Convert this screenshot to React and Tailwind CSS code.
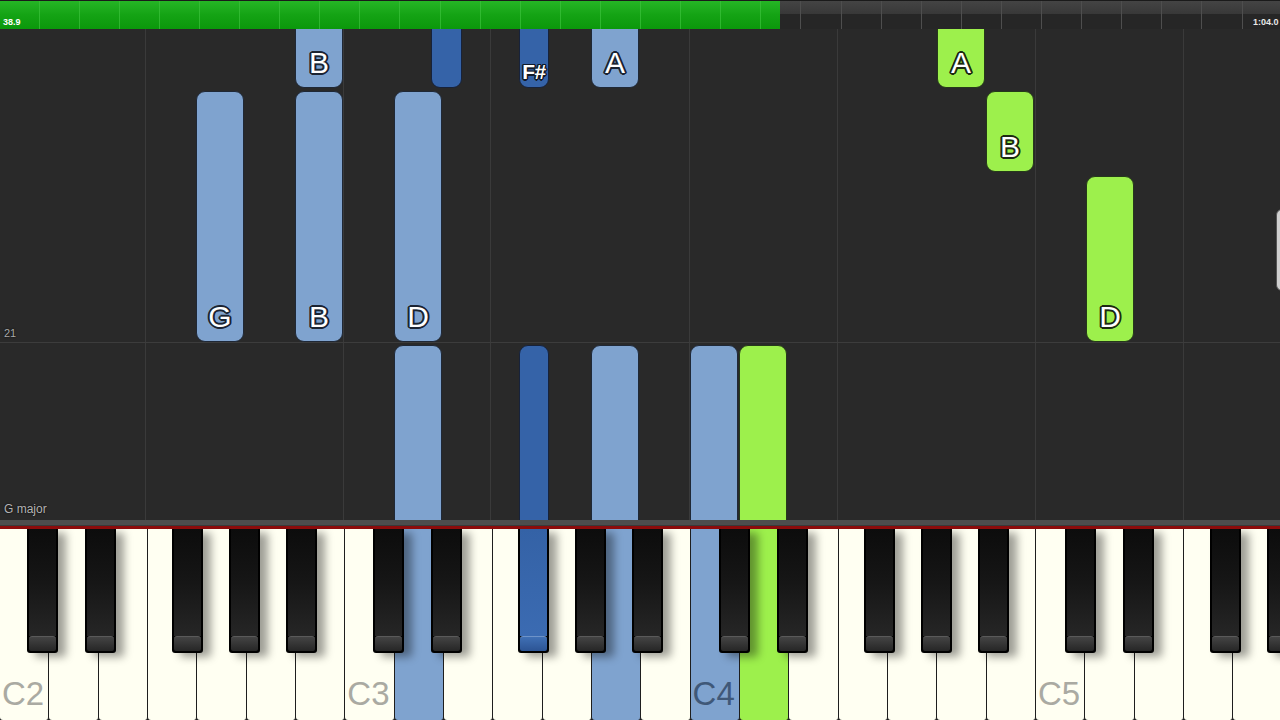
import React from "react";

const KW = 49.333;
const OCT = KW * 7;
const ROLL_TOP = 29;

const LB = "light";
const DB = "dark";
const GR = "green";

const notes = [
  { x: 295, w: 48, t: 10, b: 88, c: LB, l: "B" },
  { x: 431, w: 31, t: 10, b: 88, c: DB },
  { x: 519, w: 30, t: 10, b: 88, c: DB, l: "F#", small: true },
  { x: 591, w: 48, t: 10, b: 88, c: LB, l: "A" },
  { x: 937, w: 48, t: 10, b: 88, c: GR, l: "A" },
  { x: 196, w: 48, t: 91, b: 342, c: LB, l: "G" },
  { x: 295, w: 48, t: 91, b: 342, c: LB, l: "B" },
  { x: 394, w: 48, t: 91, b: 342, c: LB, l: "D" },
  { x: 986, w: 48, t: 91, b: 172, c: GR, l: "B" },
  { x: 1086, w: 48, t: 176, b: 342, c: GR, l: "D" },
  { x: 394, w: 48, t: 345, b: 540, c: LB },
  { x: 519, w: 30, t: 345, b: 540, c: DB },
  { x: 591, w: 48, t: 345, b: 540, c: LB },
  { x: 690, w: 48, t: 345, b: 540, c: LB },
  { x: 739, w: 48, t: 345, b: 540, c: GR },
];

const fillCls = {
  light: "bg-[#7fa3cf] border-[#1f2836]",
  dark: "bg-[#3563a8] border-[#17223a]",
  green: "bg-[#9df04c] border-[#25391a]",
};

const shadowCls = {
  light:
    "[text-shadow:0_0_1px_#1b2433,2px_0_0_#1b2433,-2px_0_0_#1b2433,0_2px_0_#1b2433,0_-2px_0_#1b2433,1.4px_1.4px_0_#1b2433,-1.4px_-1.4px_0_#1b2433,1.4px_-1.4px_0_#1b2433,-1.4px_1.4px_0_#1b2433]",
  dark:
    "[text-shadow:0_0_1px_#121a28,1.5px_0_0_#121a28,-1.5px_0_0_#121a28,0_1.5px_0_#121a28,0_-1.5px_0_#121a28,1px_1px_0_#121a28,-1px_-1px_0_#121a28,1px_-1px_0_#121a28,-1px_1px_0_#121a28]",
  green:
    "[text-shadow:0_0_1px_#1d2a12,2px_0_0_#1d2a12,-2px_0_0_#1d2a12,0_2px_0_#1d2a12,0_-2px_0_#1d2a12,1.4px_1.4px_0_#1d2a12,-1.4px_-1.4px_0_#1d2a12,1.4px_-1.4px_0_#1d2a12,-1.4px_1.4px_0_#1d2a12]",
};

const vLines = [145, 343, 490, 689, 837, 1035, 1183];

const whiteNames = ["C", "D", "E", "F", "G", "A", "B"];
const pressedWhite = { 8: LB, 12: LB, 14: LB, 15: GR };
const blackOffsets = [27, 85, 172, 229, 286];

function TopBar() {
  const ticks = [];
  for (let k = 0; k < 32; k++) ticks.push(38.5 + 40.1 * k);
  return (
    <div className="relative h-[29px] flex-none flex border-t border-[#1a1a1a] overflow-hidden">
      <div className="w-[780px] h-full bg-linear-to-b from-[#25b525] via-[#14a314] to-[#0b980b]" />
      <div className="flex-1 h-full flex flex-col">
        <div className="h-[13px] bg-linear-to-b from-[#444444] to-[#383838]" />
        <div className="flex-1 bg-[#262626]" />
      </div>
      {ticks.map((x) => (
        <div
          key={x}
          className={`absolute top-0 bottom-0 w-px ${x < 780 ? "bg-[#3cc23c]/70" : "bg-[#4e4e4e]"}`}
          style={{ left: x }}
        />
      ))}
      <div className="absolute left-[3px] top-[16px] text-[9px] leading-[10px] font-bold text-white font-[Liberation_Sans,sans-serif]">
        38.9
      </div>
      <div className="absolute left-[1253px] top-[16px] text-[9px] leading-[10px] font-bold text-[#e8e8e8] whitespace-nowrap font-[Liberation_Sans,sans-serif]">
        1:04.0
      </div>
    </div>
  );
}

function Note({ n }) {
  const top = n.t - ROLL_TOP;
  const h = n.b - n.t;
  return (
    <div
      className={`absolute rounded-[9px] border ${fillCls[n.c]} flex items-end justify-center`}
      style={{ left: n.x, top, width: n.w, height: h }}
    >
      {n.l && (
        <span
          className={`text-white leading-none font-[Liberation_Sans,sans-serif] ${shadowCls[n.c]} ${
            n.small ? "text-[21px] mb-[5px] font-bold tracking-[-0.5px]" : "text-[30px] mb-[9px]"
          }`}
        >
          {n.l}
        </span>
      )}
    </div>
  );
}

function Roll() {
  return (
    <div className="relative h-[491px] flex-none bg-[#292929] overflow-hidden">
      {vLines.map((x) => (
        <div key={x} className="absolute top-0 bottom-0 w-px bg-[#3a3a3a]" style={{ left: x }} />
      ))}
      <div className="absolute left-0 right-0 top-[313px] h-px bg-[#3c3c3c]" />
      {notes.map((n, i) => (
        <Note key={i} n={n} />
      ))}
      <div className="absolute left-[4px] top-[299px] text-[11px] leading-none text-[#a9a9a9] font-[Liberation_Sans,sans-serif] [text-shadow:0_0_2px_#000]">
        21
      </div>
      <div className="absolute left-[4px] top-[474px] text-[12px] leading-none text-[#b4b4b4] font-[Liberation_Sans,sans-serif] [text-shadow:0_0_2px_#000]">
        G major
      </div>
      <div className="absolute left-[1276px] top-[180px] w-[8px] h-[82px] rounded-l-[6px] bg-[#cfcfcf] border border-[#555]" />
    </div>
  );
}

function WhiteKey({ i }) {
  const p = pressedWhite[i];
  const bg = p === LB ? "bg-[#7fa3cf]" : p === GR ? "bg-[#9df04c]" : "bg-[#fffff2]";
  const name = whiteNames[i % 7];
  const showLabel = name === "C";
  const label = `C${2 + Math.floor(i / 7)}`;
  return (
    <div className={`relative flex-none w-[49.333px] h-full ${bg} border-r-[1.5px] border-[#1e1e1e] rounded-b-[3px]`}>
      {showLabel && (
        <span
          className={`absolute left-[2px] bottom-[10px] text-[33px] leading-none font-[Liberation_Sans,sans-serif] ${
            p === LB ? "text-[#3f5878]" : "text-[#aaaaa2]"
          }`}
        >
          {label}
        </span>
      )}
    </div>
  );
}

function BlackKey({ left, pressed }) {
  return (
    <div
      className="absolute top-0 h-[124px] w-[31px] rounded-b-[3px] bg-black p-[2px] pt-0 shadow-[8px_4px_9px_rgba(0,0,0,0.38)]"
      style={{ left }}
    >
      <div className="h-full flex flex-col rounded-b-[2px] overflow-hidden">
        <div
          className={`flex-1 ${
            pressed ? "bg-linear-to-b from-[#3462a6] to-[#3b6bb2]" : "bg-linear-to-b from-[#0c0c0c] via-[#161616] to-[#262626]"
          }`}
        />
        <div
          className={`h-[15px] border-t rounded-t-[3px] ${
            pressed
              ? "border-[#6e93c8] bg-linear-to-b from-[#4070b5] to-[#2c5494]"
              : "border-[#5a5a5a] bg-linear-to-b from-[#444444] to-[#262626]"
          }`}
        />
      </div>
    </div>
  );
}

function Keyboard() {
  const whites = [];
  for (let i = 0; i < 26; i++) whites.push(i);
  const blacks = [];
  for (let o = 0; o < 4; o++) {
    blackOffsets.forEach((off, j) => {
      blacks.push({ left: o * OCT + off + o * 0.6, key: `${o}-${j}`, pressed: o === 1 && j === 2 });
    });
  }
  return (
    <div className="relative h-[191px] flex-none overflow-hidden bg-[#1e1e1e]">
      <div className="flex h-full">
        {whites.map((i) => (
          <WhiteKey key={i} i={i} />
        ))}
      </div>
      {blacks.map((b) => (
        <BlackKey key={b.key} left={b.left} pressed={b.pressed} />
      ))}
    </div>
  );
}

export default function App() {
  return (
    <div className="w-[1280px] h-[720px] flex flex-col bg-[#292929] overflow-hidden">
      <TopBar />
      <Roll />
      <div className="h-[6px] flex-none bg-[#4d4d4d] border-b border-[#3a3a3a]" />
      <div className="h-[3px] flex-none bg-[#8c0b0b]" />
      <Keyboard />
    </div>
  );
}
